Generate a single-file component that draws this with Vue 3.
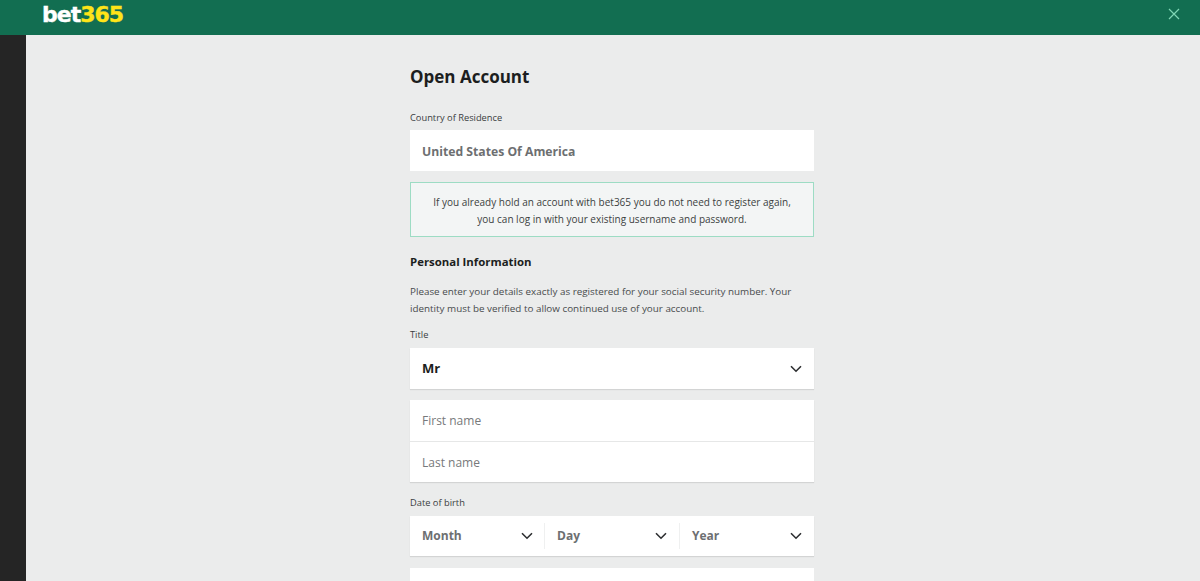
<script setup>
const dateParts = ['Month', 'Day', 'Year']
</script>

<template>
  <div class="page">
    <header class="topbar">
      <div class="logo">bet<span class="logo-num">365</span></div>
      <svg class="close" width="12" height="12" viewBox="0 0 12 12" aria-label="Close">
        <path d="M1 1l10 10M11 1L1 11" stroke="#7fd6b4" stroke-width="1.2" fill="none" />
      </svg>
    </header>
    <div class="body">
      <aside class="rail"></aside>
      <main class="main">
        <div class="form">
          <h1 class="title">Open Account</h1>
          <div class="label label-country">Country of Residence</div>
          <div class="field country">United States Of America</div>
          <div class="notice">
            If you already hold an account with bet365 you do not need to register again,<br />
            you can log in with your existing username and password.
          </div>
          <h2 class="section">Personal Information</h2>
          <p class="intro">
            Please enter your details exactly as registered for your social security number. Your
            identity must be verified to allow continued use of your account.
          </p>
          <div class="label label-title">Title</div>
          <div class="field select raised">
            <span class="value">Mr</span>
            <svg class="chev" width="12" height="8" viewBox="0 0 12 8"><path d="M1 1.2l5 5 5-5" /></svg>
          </div>
          <div class="names raised">
            <div class="field name first">First name</div>
            <div class="field name last">Last name</div>
          </div>
          <div class="label label-dob">Date of birth</div>
          <div class="dob raised">
            <div v-for="part in dateParts" :key="part" class="dob-part">
              <span class="dob-text">{{ part }}</span>
              <svg class="chev" width="12" height="8" viewBox="0 0 12 8"><path d="M1 1.2l5 5 5-5" /></svg>
            </div>
          </div>
          <div class="field next"></div>
        </div>
      </main>
    </div>
  </div>
</template>

<style>
html, body { margin: 0; overflow: hidden; }
</style>

<style scoped>
.page {
  width: 1200px;
  height: 581px;
  overflow: hidden;
  display: flex;
  flex-direction: column;
  font-family: "Open Sans", "Noto Sans", sans-serif;
  color: #26282a;
}
.topbar {
  flex: 0 0 35px;
  background: #126e51;
  display: flex;
  align-items: flex-start;
  justify-content: space-between;
  padding: 0 20px 0 42px;
}
.logo {
  font-family: "DejaVu Sans", sans-serif;
  font-weight: 700;
  font-size: 22px;
  line-height: 29px;
  letter-spacing: -1px;
  -webkit-text-stroke: 0.4px currentColor;
  color: #fff;
}
.logo-num { color: #ffe418; }
.close { margin-top: 8px; }
.body { flex: 1; display: flex; min-height: 0; }
.rail { flex: 0 0 26px; background: #252525; }
.main {
  flex: 1;
  background: #ebecec;
  display: flex;
  justify-content: center;
  padding-right: 2px;
}
.form { width: 404px; }
.title {
  margin: 0;
  padding-top: 29px;
  font-size: 17px;
  line-height: 25px;
  font-weight: 700;
  color: #1c1e20;
}
.label { font-size: 9.3px; line-height: 14px; color: #3a3d3f; }
.label-country { margin-top: 22px; }
.field { background: #fff; box-sizing: border-box; padding-left: 12px; }
.country {
  margin-top: 5px;
  height: 41px;
  line-height: 43px;
  font-size: 12.2px;
  font-weight: 700;
  color: #6d6f71;
}
.notice {
  margin-top: 11px;
  height: 55px;
  box-sizing: border-box;
  border: 1px solid #9ddcc4;
  background: #f3f5f5;
  text-align: center;
  font-size: 10px;
  line-height: 17px;
  padding-top: 11px;
  color: #3c3f41;
}
.section {
  margin: 16px 0 0;
  font-size: 11.4px;
  line-height: 17px;
  font-weight: 700;
  color: #1c1e20;
}
.intro {
  margin: 13px 0 0;
  font-size: 9.85px;
  line-height: 17px;
  color: #484b4d;
  width: 395px;
}
.label-title { margin-top: 11px; }
.select {
  margin-top: 6px;
  height: 41px;
  display: flex;
  align-items: center;
  justify-content: space-between;
  padding-right: 12px;
}
.value { font-size: 13px; font-weight: 700; color: #1c1e20; margin-top: -2px; }
.raised { box-shadow: 0 1px 1px rgba(0, 0, 0, 0.1); }
.chev { display: block; }
.chev path { fill: none; stroke: #2c2e30; stroke-width: 1.6; }
.names { margin-top: 11px; background: #fff; }
.name {
  line-height: 41px;
  font-size: 12px;
  color: #77797b;
}
.first { height: 42px; border-bottom: 1px solid #e6e7e7; }
.last { height: 40px; }
.label-dob { margin-top: 14px; }
.dob {
  margin-top: 6px;
  height: 40px;
  background: #fff;
  display: grid;
  grid-template-columns: 134px 135px 135px;
  align-items: center;
}
.dob-part {
  display: flex;
  align-items: center;
  justify-content: space-between;
  padding: 0 12px;
  height: 26px;
  font-size: 12px;
  font-weight: 700;
  color: #6d6f71;
}
.dob-text { margin-top: -2px; }
.dob-part:first-child { padding-right: 11px; }
.dob-part + .dob-part { border-left: 1px solid #eff0f0; }
.next { margin-top: 12px; height: 60px; }
</style>
